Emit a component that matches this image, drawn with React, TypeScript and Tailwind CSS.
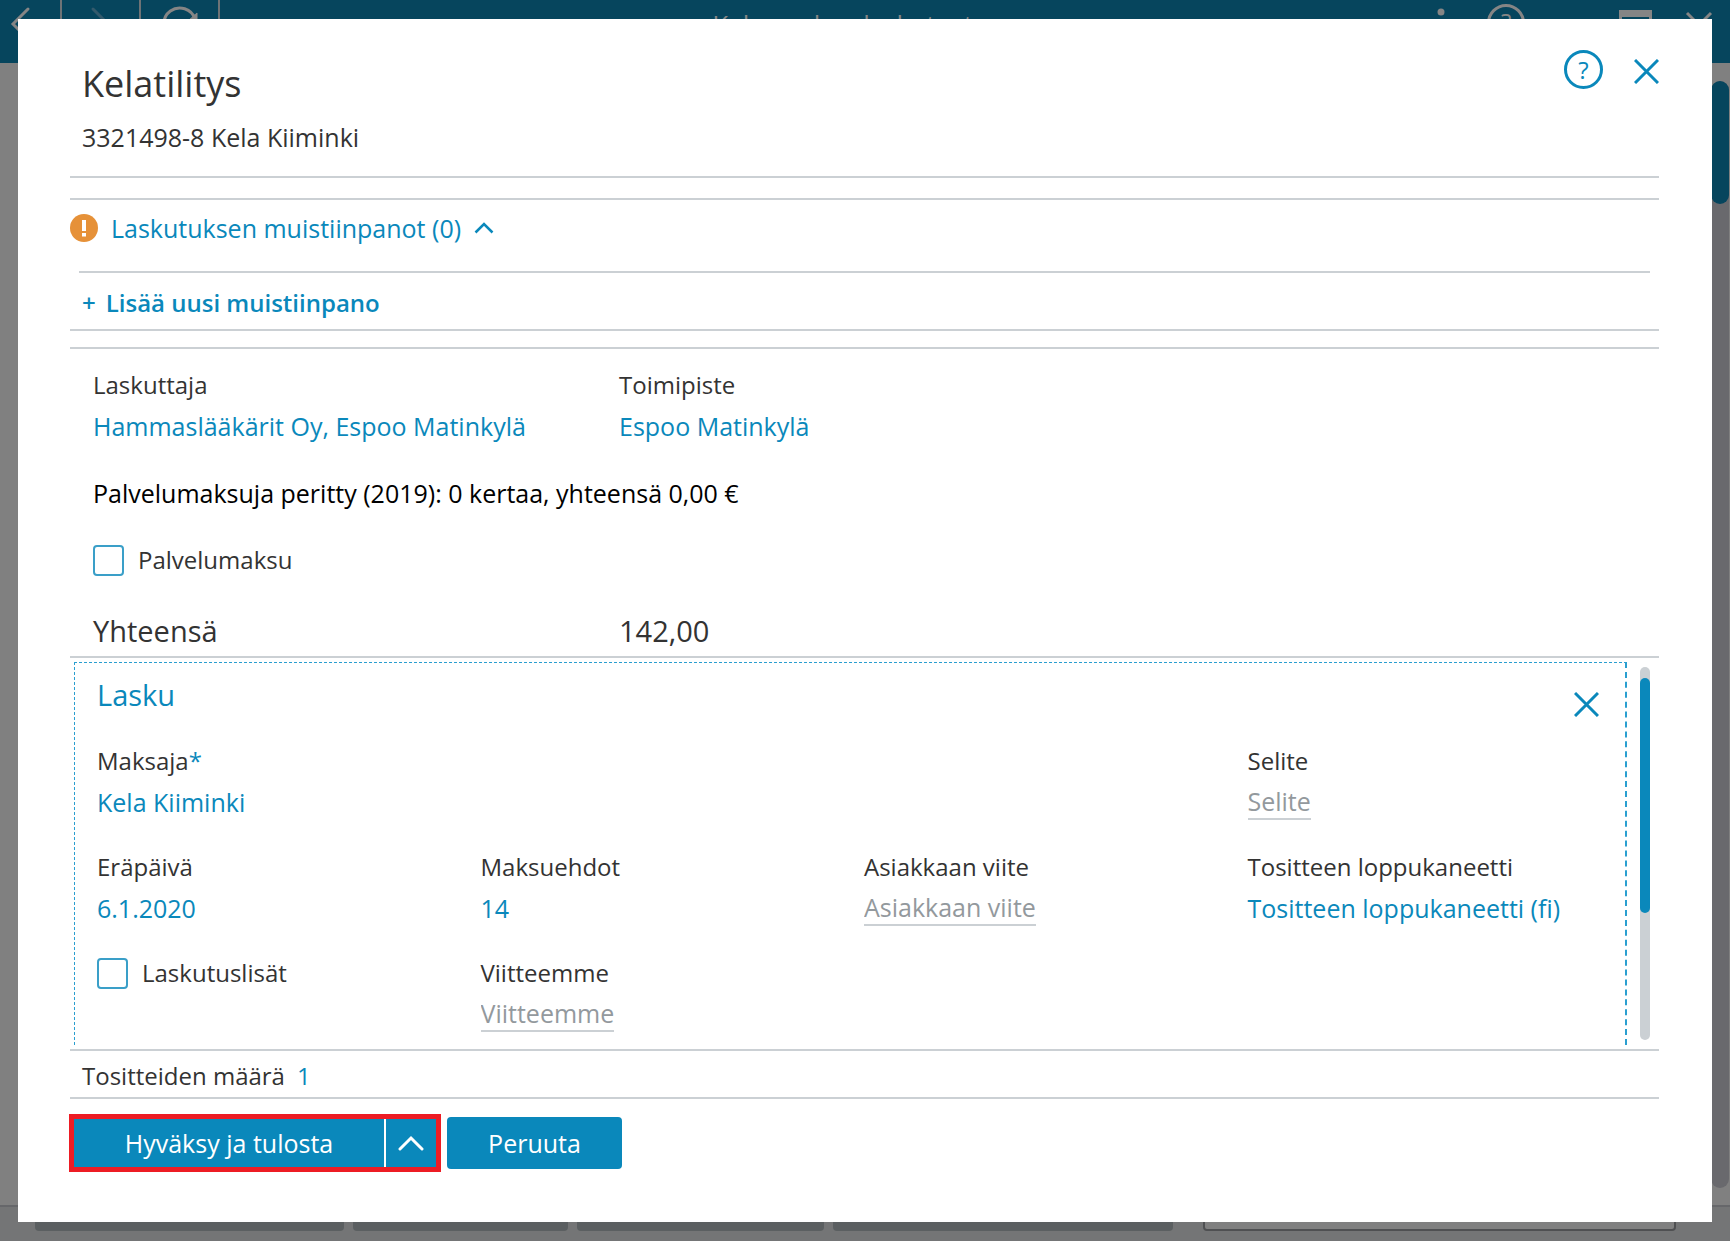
import React, { useState } from 'react';

const LABEL_TEXT = 'text-[24px] leading-9';
const VALUE_TEXT = 'text-[25px] leading-9';

interface FieldProps {
  label: string;
  value: string;
  required?: boolean;
}

const Field: React.FC<FieldProps> = ({ label, value, required }) => (
  <div className="flex flex-col items-start gap-[5px]">
    <span className={LABEL_TEXT}>
      {label}
      {required && <span className="text-[#0a88bb]">*</span>}
    </span>
    <button type="button" aria-label={`${label}: ${value}`} className={`text-left text-[#0a88bb] ${VALUE_TEXT}`}>
      {value}
    </button>
  </div>
);

const InputField: React.FC<{ id: string; label: string }> = ({ id, label }) => (
  <div className="flex flex-col items-start gap-[5px]">
    <label htmlFor={id} className={LABEL_TEXT}>{label}</label>
    <input
      id={id}
      type="text"
      placeholder={label}
      className={`field-sizing-content h-9 border-b-2 border-[#cbd0d4] text-[#0a88bb] outline-none placeholder:text-[#93999d] ${VALUE_TEXT}`}
    />
  </div>
);

const Checkbox: React.FC<{ id: string; label: string }> = ({ id, label }) => {
  const [checked, setChecked] = useState(false);
  return (
    <div className={`flex items-center gap-[14px] self-start ${LABEL_TEXT}`}>
      <input
        id={id}
        type="checkbox"
        checked={checked}
        onChange={(e) => setChecked(e.target.checked)}
        className="size-[31px] appearance-none rounded border-2 border-[#3a9fc8] bg-white checked:bg-[#0a88bb]"
      />
      <label htmlFor={id}>{label}</label>
    </div>
  );
};

const CloseIcon = () => (
  <svg width="25" height="25" viewBox="0 0 25 25" fill="none" stroke="currentColor" strokeWidth="3">
    <path d="M1 1 24 24M24 1 1 24" />
  </svg>
);

const HelpIcon = () => (
  <span className="flex size-[39px] items-center justify-center rounded-full border-3 border-current text-[24px] leading-none">
    ?
  </span>
);

// Main window behind the dialog, dimmed by the overlay
const Background = () => (
  <div className="flex min-h-screen flex-col bg-[#808080]" aria-hidden="true">
    <div className="flex h-[63px] items-start justify-between overflow-hidden bg-[#06455d] text-[#858585]">
      <div className="flex w-[560px]">
        <div className="h-[63px] w-[62px] border-r-2 border-[#6e7376]">
          <svg width="60" height="48" fill="none" stroke="currentColor" strokeWidth="3" strokeLinecap="round">
            <path d="M28 9 13 24 28 39" />
          </svg>
        </div>
        <div className="h-[63px] w-[79px] border-r-2 border-[#6e7376]">
          <svg width="60" height="48" fill="none" stroke="#335a6c" strokeWidth="3" strokeLinecap="round">
            <path d="M31 9 46 24 31 39" />
          </svg>
        </div>
        <div className="h-[63px] w-[79px] border-r-2 border-[#6e7376]">
          <svg width="77" height="48" fill="none" stroke="currentColor" strokeWidth="3">
            <path d="M54 19A16 16 0 1 0 54 29" />
            <path d="M56 13v8h-9z" fill="currentColor" strokeWidth="1" />
          </svg>
        </div>
      </div>
      <span className="pt-[6px] text-[26px] leading-9">Kelan vakaa laskutustapa</span>
      <div className="flex w-[560px] justify-end">
        <svg width="300" height="63" fill="none" stroke="currentColor" strokeWidth="3">
          <circle cx="11" cy="12" r="3.5" fill="currentColor" stroke="none" />
          <circle cx="11" cy="24" r="3.5" fill="currentColor" stroke="none" />
          <circle cx="76" cy="23" r="17.5" />
          <text x="71" y="31" fontSize="24" fill="currentColor" stroke="none">?</text>
          <path d="M189 10h33v26h-33zM192 17v16h27V17z" fill="currentColor" fillRule="evenodd" stroke="none" />
          <path d="M257 13 281 37M281 13 257 37" />
        </svg>
      </div>
    </div>
    <div className="flex flex-1 justify-end pt-[18px] pb-[17px]">
      <div className="mr-px w-[18px] rounded-full bg-[#69696d]">
        <div className="h-[123px] rounded-full bg-[#06455d]" />
      </div>
    </div>
    <div className="flex h-9 gap-[9px] border-t-2 border-[#66676a] bg-[#747576] pr-[54px] pb-[10px] pl-[35px]">
      <div className="w-[309px] rounded-b bg-[#5b5f61]" />
      <div className="w-[215px] rounded-b bg-[#5b5f61]" />
      <div className="w-[247px] rounded-b bg-[#5b5f61]" />
      <div className="w-[340px] rounded-b bg-[#5b5f61]" />
      <div className="ml-[21px] flex-1 rounded-b border-2 border-[#4f5052] bg-[#808080]" />
    </div>
  </div>
);

const InvoicePanel = () => (
  <section className="flex min-h-0 flex-1 border-t-2 border-[#cbd0d4] px-1 pt-1 pb-1">
    <div className="flex-1 overflow-hidden border-t border-r-2 border-l border-dashed border-[#2a9fd0] pt-3 pl-[22px]">
      <div className="flex items-start justify-between pr-[26px]">
        <h2 className="text-[29px] leading-10 text-[#0a88bb]">Lasku</h2>
        <button type="button" aria-label="Poista lasku" className="pt-[17px] text-[#0a88bb]">
          <CloseIcon />
        </button>
      </div>
      <div className="-mr-[6px] grid grid-cols-4 gap-y-[29px] pt-[26px]">
        <div className="col-span-3">
          <Field label="Maksaja" value="Kela Kiiminki" required />
        </div>
        <InputField id="selite" label="Selite" />
        <Field label="Eräpäivä" value="6.1.2020" />
        <Field label="Maksuehdot" value="14" />
        <InputField id="asiakkaan-viite" label="Asiakkaan viite" />
        <Field label="Tositteen loppukaneetti" value="Tositteen loppukaneetti (fi)" />
        <Checkbox id="laskutuslisat" label="Laskutuslisät" />
        <InputField id="viitteemme" label="Viitteemme" />
      </div>
    </div>
    <div className="mt-[5px] mr-[5px] mb-[5px] ml-[13px] w-[10px] rounded-full bg-[#cbd0d4] pt-[11px]">
      <div className="h-[65%] rounded-full bg-[#0a88bb]" />
    </div>
  </section>
);

const App: React.FC = () => {
  const [notesOpen, setNotesOpen] = useState(true);

  return (
    <div className="font-['Open_Sans','Noto_Sans',sans-serif] text-[#333333]">
      <Background />

      <div className="fixed inset-0 flex px-[18px] py-[19px]">
        <div
          role="dialog"
          aria-labelledby="dialog-title"
          className="flex flex-1 flex-col bg-white pt-[31px] pr-[53px] pb-[50px] pl-[52px]"
        >
          <header className="flex justify-between pb-[21px]">
            <div className="flex flex-col gap-[11px] pt-[10px] pl-3">
              <h1 id="dialog-title" className="text-[36px] leading-[48px]">Kelatilitys</h1>
              <p className={VALUE_TEXT}>3321498-8 Kela Kiiminki</p>
            </div>
            <div className="flex items-start gap-[31px] text-[#0a88bb]">
              <button type="button" aria-label="Ohje">
                <HelpIcon />
              </button>
              <button type="button" aria-label="Sulje" className="pt-[9px]">
                <CloseIcon />
              </button>
            </div>
          </header>

          <div className="mb-5 border-t-2 border-[#cbd0d4]" />

          <section className="border-y-2 border-[#cbd0d4] pt-[10px] pb-2 text-[#0a88bb]">
            <button
              type="button"
              aria-expanded={notesOpen}
              onClick={() => setNotesOpen(!notesOpen)}
              className={`flex items-center gap-[13px] pb-[25px] ${VALUE_TEXT}`}
            >
              <svg width="28" height="28" viewBox="0 0 28 28">
                <circle cx="14" cy="14" r="14" fill="#e69138" />
                <path d="M12 6h4v11h-4zM12 19h4v3.5h-4z" fill="#fff" />
              </svg>
              Laskutuksen muistiinpanot (0)
              <svg width="20" height="12" viewBox="0 0 20 12" fill="none" stroke="currentColor" strokeWidth="2.5">
                <path d="M1.5 10.5 10 2 18.5 10.5" />
              </svg>
            </button>
            {notesOpen && (
              <div className="mx-[9px] border-t-2 border-[#cbd0d4] pt-3 pl-[3px]">
                <button type="button" className={`flex gap-[10px] font-semibold ${LABEL_TEXT}`}>
                  <span>+</span>
                  Lisää uusi muistiinpano
                </button>
              </div>
            )}
          </section>

          <section className="mt-4 border-t-2 border-[#cbd0d4] pt-[18px] pb-[5px] pl-[23px]">
            <div className="-mr-3 grid grid-cols-3">
              <Field label="Laskuttaja" value="Hammaslääkärit Oy, Espoo Matinkylä" />
              <Field label="Toimipiste" value="Espoo Matinkylä" />
            </div>
            <p className={`pt-[31px] pb-[31px] text-black ${VALUE_TEXT}`}>
              Palvelumaksuja peritty (2019): 0 kertaa, yhteensä 0,00 €
            </p>
            <Checkbox id="palvelumaksu" label="Palvelumaksu" />
            <div className="-mr-3 grid grid-cols-3 pt-[33px] text-[29px] leading-10">
              <span>Yhteensä</span>
              <span>142,00</span>
            </div>
          </section>

          <InvoicePanel />

          <div className={`flex gap-3 border-y-2 border-[#cbd0d4] pt-[7px] pb-[3px] pl-3 ${LABEL_TEXT}`}>
            <span>Tositteiden määrä</span>
            <span className="text-[#0a88bb]">1</span>
          </div>

          <footer className={`-ml-px flex items-center gap-[6px] pt-[15px] text-white ${VALUE_TEXT}`}>
            <div className="flex h-[58px] border-5 border-[#ed1c24] bg-[#0a88bb]">
              <button type="button" className="w-[310px]">Hyväksy ja tulosta</button>
              <button
                type="button"
                aria-label="Lisää vaihtoehtoja"
                className="flex w-[52px] items-center justify-center border-l-2 border-white"
              >
                <svg width="26" height="16" viewBox="0 0 26 16" fill="none" stroke="currentColor" strokeWidth="3" strokeLinecap="round">
                  <path d="M2 14 13 3 24 14" />
                </svg>
              </button>
            </div>
            <button type="button" className="h-[52px] w-[175px] rounded bg-[#0a88bb]">Peruuta</button>
          </footer>
        </div>
      </div>
    </div>
  );
};

export default App;
